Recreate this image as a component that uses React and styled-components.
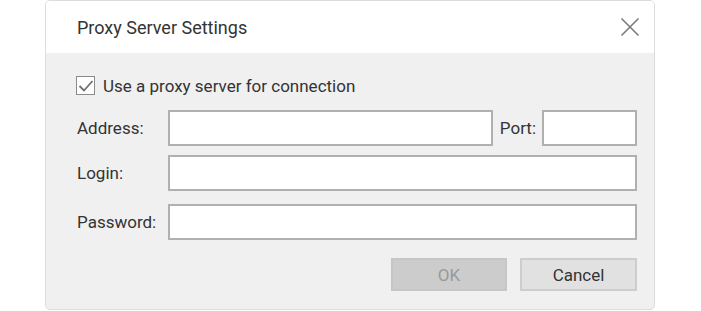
import React from "react";
import styled, { createGlobalStyle } from "styled-components";

const GlobalStyle = createGlobalStyle`
  body {
    margin: 0;
    background: #ffffff;
    font-family: Roboto, "Liberation Sans", sans-serif;
  }
`;

const Page = styled.div`
  width: 701px;
  height: 311px;
  padding-left: 45px;
  box-sizing: border-box;
`;

const Dialog = styled.div`
  width: 610px;
  height: 310px;
  box-sizing: border-box;
  border: 1px solid #dcdcdc;
  border-radius: 5px;
  overflow: hidden;
  display: flex;
  flex-direction: column;
  background: #f0f0f0;
`;

const Header = styled.div`
  height: 52px;
  flex-shrink: 0;
  background: #ffffff;
  display: flex;
  align-items: center;
  justify-content: space-between;
  padding: 0 14px 0 31px;
`;

const Title = styled.h2`
  margin: 0;
  font-size: 18px;
  font-weight: 400;
  color: #333333;
`;

const CloseButton = styled.button`
  border: none;
  background: none;
  padding: 0;
  width: 20px;
  height: 20px;
  display: flex;
  align-items: center;
  justify-content: center;
  cursor: pointer;
`;

const Body = styled.div`
  flex: 1;
  display: flex;
  flex-direction: column;
  padding: 23px 17px 0 30px;
`;

const CheckRow = styled.label`
  display: flex;
  align-items: center;
  gap: 8px;
  font-size: 17px;
  color: #333333;
  height: 19px;
  margin-bottom: 15px;
`;

const CheckBox = styled.span`
  width: 19px;
  height: 19px;
  box-sizing: border-box;
  border: 1.5px solid #8a8a8a;
  background: #ffffff;
  display: flex;
  align-items: center;
  justify-content: center;
`;

const Row = styled.div`
  display: flex;
  align-items: center;
  margin-bottom: ${(p) => p.$gap}px;
`;

const Label = styled.span`
  width: 92px;
  flex-shrink: 0;
  padding-left: 1px;
  box-sizing: border-box;
  font-size: 17px;
  color: #333333;
`;

const PortLabel = styled.span`
  font-size: 17px;
  color: #333333;
  margin: 0 6px 0 7px;
`;

const Input = styled.input`
  flex: ${(p) => (p.$width ? "none" : "1")};
  width: ${(p) => (p.$width ? `${p.$width}px` : "auto")};
  min-width: 0;
  height: 36px;
  box-sizing: border-box;
  border: 2px solid #b0b0b0;
  background: #ffffff;
  outline: none;
  font-size: 15px;
  font-family: inherit;
  padding: 0 8px;
`;

const Buttons = styled.div`
  display: flex;
  justify-content: flex-end;
  gap: 13px;
  margin-top: 18px;
`;

const Button = styled.button`
  width: ${(p) => p.$width}px;
  height: 33px;
  box-sizing: border-box;
  font-family: inherit;
  font-size: 17px;
  border: 2px solid ${(p) => (p.disabled ? "#c6c6c6" : "#cdcdcd")};
  background: ${(p) => (p.disabled ? "#cccccc" : "#e1e1e1")};
  color: ${(p) => (p.disabled ? "#999999" : "#333333")};
  padding: 0;
`;

export default function App() {
  return (
    <Page>
      <GlobalStyle />
      <Dialog>
        <Header>
          <Title>Proxy Server Settings</Title>
          <CloseButton>
            <svg width="20" height="20" viewBox="0 0 20 20">
              <path
                d="M1.5 1.5 L18.5 18.5 M18.5 1.5 L1.5 18.5"
                stroke="#7a7a7a"
                strokeWidth="1.6"
                fill="none"
              />
            </svg>
          </CloseButton>
        </Header>
        <Body>
          <CheckRow>
            <CheckBox>
              <svg width="16" height="16" viewBox="0 0 16 16">
                <path
                  d="M1.5 8 L6 12.5 L14.5 3"
                  stroke="#707070"
                  strokeWidth="1.8"
                  fill="none"
                />
              </svg>
            </CheckBox>
            Use a proxy server for connection
          </CheckRow>
          <Row $gap={9}>
            <Label>Address:</Label>
            <Input />
            <PortLabel>Port:</PortLabel>
            <Input $width={95} />
          </Row>
          <Row $gap={13}>
            <Label>Login:</Label>
            <Input />
          </Row>
          <Row $gap={0}>
            <Label>Password:</Label>
            <Input type="password" />
          </Row>
          <Buttons>
            <Button $width={116} disabled>
              OK
            </Button>
            <Button $width={117}>Cancel</Button>
          </Buttons>
        </Body>
      </Dialog>
    </Page>
  );
}
